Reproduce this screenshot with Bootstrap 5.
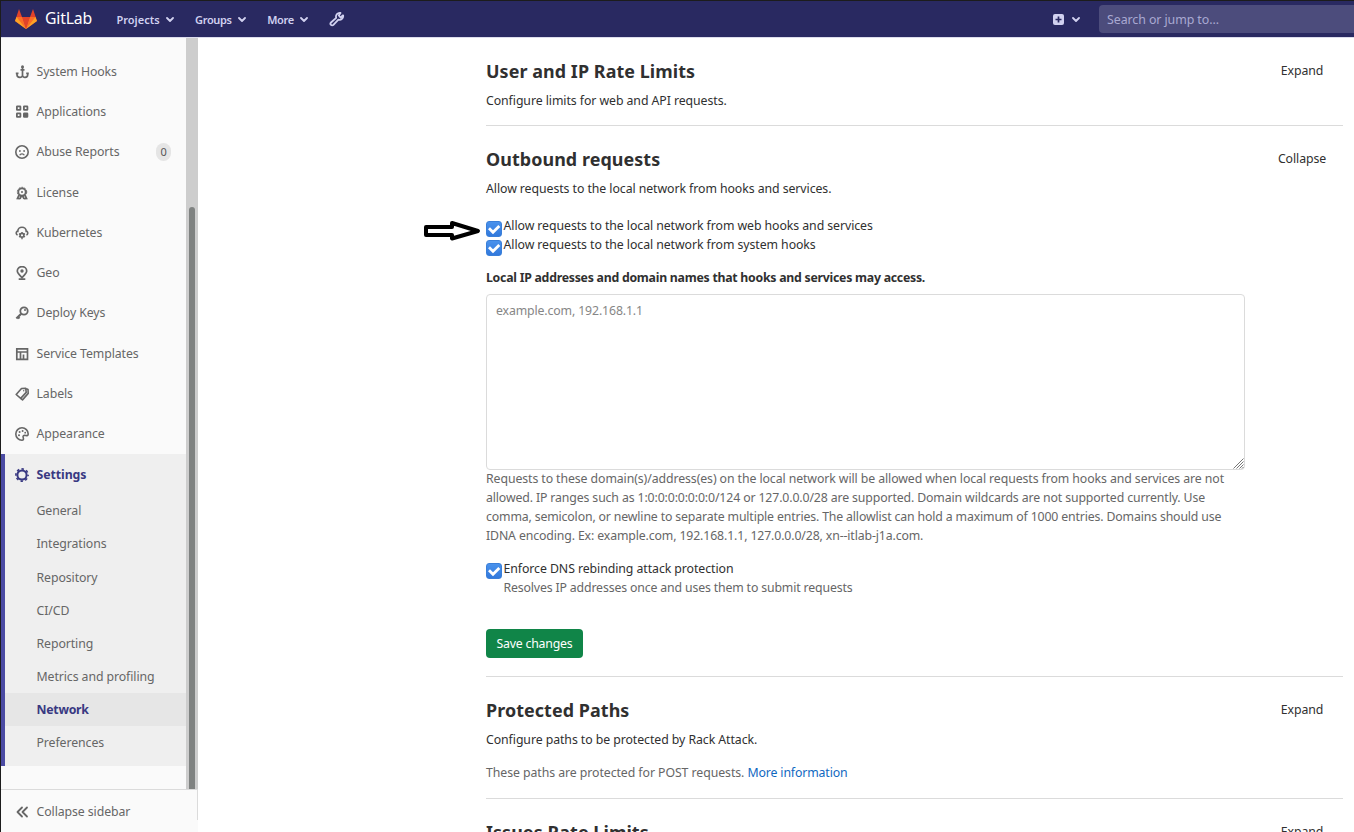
<!DOCTYPE html>
<html lang="en">
<head>
<meta charset="utf-8">
<meta name="viewport" content="width=device-width, initial-scale=1">
<title>Network · Settings · GitLab</title>
<link href="https://cdn.jsdelivr.net/npm/bootstrap@5.3.0/dist/css/bootstrap.min.css" rel="stylesheet">
<style>
body{font-family:"Noto Sans",sans-serif;font-size:12.3px;line-height:19px;letter-spacing:-.067px;color:#303030;height:832px;overflow:hidden;background:#fff;border-left:1px solid #1c1c1c;border-top:1px solid #1c1c1c}
a{text-decoration:none}
span,a,h2,p,label{white-space:nowrap}
.topbar{height:36px;background:#292961;color:#d1d1f0;flex:none;padding-left:14px}
.brand-name{font-size:15.8px;color:#fff;margin:-1px 24.5px 0 8px;width:47px;letter-spacing:-.2px}
.top-item{font-size:11px;font-weight:600;color:#d1d1f0;letter-spacing:0;margin-right:21px;gap:6.5px}
.top-item.snug{letter-spacing:-.35px}
.search-box{height:28px;background:#4c4c7c;border-radius:4px 0 0 4px;width:255px;padding-left:8px;color:#a9a9d2;font-size:12.4px;letter-spacing:-.08px;margin-left:19px}
.side{width:197px;background:#fafafa;flex:none;border-top:1px solid #dcdcec;height:795px}
.side-scroll{height:751px}
.side a{color:#666;letter-spacing:-.085px}
.side-nav{padding-top:13px}
.side-item{height:40.3px;padding-left:14px}
.side-item svg,.side-foot svg{width:14px;height:14px;margin-right:7.5px;flex:none;position:relative;top:.5px}
.count{background:#e5e5e5;border-radius:9px;width:15px;height:18px;font-size:11px;margin:0 15px 0 auto;color:#555}
.settings-group{background:#efefef;border-left:4px solid #4b4ba3;height:312px}
.settings-group .side-item{padding-left:10px}
.side a.chosen{color:#393982;font-weight:700;letter-spacing:-.06px}
.sub-item{height:33.1px;padding-left:31.500px}
.side a.sub-on{background:#e6e6e6;letter-spacing:-.26px}
.track{width:12px;background:#cdcdcd;padding:169px 3px 0}
.thumb{background:#7f8281;border-radius:3px 3px 0 0}
.side-foot{height:43px;border-top:1px solid #dbdbdb;padding-left:14px}
.foot-edge{width:1px;height:30px;background:#dbdbdb}
.main-pane{border-top:1px solid #dcdcec}
.content-col{margin-left:288px;width:857px}
.set-block{padding-top:21px;border-bottom:1px solid #dbdbdb}
.set-block h2{font-size:17.9px;line-height:24px;font-weight:700;letter-spacing:.08px;margin:0 0 8px}
.toggle-col{width:82px;text-align:center;line-height:24px;letter-spacing:-.09px}
.muted{color:#666}
.check-row{height:19px}
.box{width:16px;height:16px;margin:5px 1.500px 0 0;border:1px solid #3a7fd9;border-radius:3px;background:linear-gradient(#4a92ec,#3279dc);flex:none}
.box-up{margin-top:4px}
.box svg{display:block}
.arrow{position:absolute;left:-63px;top:3px}
.ip-label{letter-spacing:-.25px;margin:14px 0 7px}
.ip-wrap{width:759px;height:176px}
.ip-area{height:176px;border:1px solid #dbdbdb;border-radius:4px;padding:6px 9px;font-size:12.3px;line-height:19px;letter-spacing:-.13px;box-shadow:none;resize:none}
.ip-area::placeholder{color:#868686}
.grip{position:absolute;right:1px;bottom:1px}
.t1{letter-spacing:-.089px}.t2{letter-spacing:-.129px}.t3{letter-spacing:-.15px}
.save-btn{background:#108548;color:#fff;height:29px;width:97px;border-radius:4px;font-size:12.3px;line-height:19px;letter-spacing:-.2px;padding:0;margin:32px 0 18px}
.more-link{color:#1068bf}
</style>
</head>
<body class="d-flex flex-column">
<header class="topbar d-flex align-items-center">
  <svg width="22" height="20" viewBox="0 0 22 20"><path d="M4 0 0 12l11 8 11-8L18 0l-3 8H7z" fill="#e24329"/><path d="M0 12 1.500 8H7l4 12z" fill="#fca326"/><path d="M22 12 20.500 8H15l-4 12z" fill="#fca326"/><path d="M7 8H1.500L11 20zM15 8h5.500L11 20z" fill="#fc6d26"/><path d="M7 8h8l-4 12z" fill="#e24329"/></svg>
  <span class="brand-name">GitLab</span>
  <a href="#" class="top-item d-flex align-items-center">Projects <svg width="8" height="5" viewBox="0 0 8 5" fill="none" stroke="currentColor" stroke-width="1.800" stroke-linecap="round" stroke-linejoin="round"><path d="m1 1 3 3 3-3"/></svg></a>
  <a href="#" class="top-item snug d-flex align-items-center">Groups <svg width="8" height="5" viewBox="0 0 8 5" fill="none" stroke="currentColor" stroke-width="1.800" stroke-linecap="round" stroke-linejoin="round"><path d="m1 1 3 3 3-3"/></svg></a>
  <a href="#" class="top-item snug d-flex align-items-center">More <svg width="8" height="5" viewBox="0 0 8 5" fill="none" stroke="currentColor" stroke-width="1.800" stroke-linecap="round" stroke-linejoin="round"><path d="m1 1 3 3 3-3"/></svg></a>
  <svg width="16" height="16" viewBox="0 0 16 16" fill="none" stroke="#d1d1f0" stroke-width="1.800" stroke-linejoin="round"><path d="M11.500 2a3.700 3.700 0 0 0-4.300 4.800L2 11.500a1.600 1.600 0 0 0 2.400 2.400l5-5.300a3.700 3.700 0 0 0 4.700-4.300L11.500 6.500 9.800 4.500z"/></svg>
  <svg class="ms-auto" width="11" height="11" viewBox="0 0 11 11"><rect width="11" height="11" rx="2" fill="#d1d1f0"/><path d="M5.500 2.500v6M2.500 5.500h6" stroke="#292961" stroke-width="1.700"/></svg>
  <svg class="ms-2" width="8" height="5" viewBox="0 0 8 5" fill="none" stroke="#d1d1f0" stroke-width="1.800" stroke-linecap="round" stroke-linejoin="round"><path d="m1 1 3 3 3-3"/></svg>
  <div class="search-box d-flex align-items-center">Search or jump to…</div>
</header>
<div class="d-flex">
  <aside class="side">
    <div class="side-scroll d-flex">
      <nav class="side-nav flex-grow-1">
        <a href="#" class="side-item d-flex align-items-center"><svg viewBox="0 0 14 14" fill="none" stroke="currentColor" stroke-width="1.700"><circle cx="7.500" cy="1.800" r="1.500" fill="currentColor" stroke="none"/><path d="M7.500 2v8.500M5.500 4.800h4M2 7.500v2.200c0 3.500 5.500 3.500 5.500.5 0 3 5.200 3 5.200-.5V7.500M.8 8.300h2.700M11.200 8.300h2.600"/></svg>System Hooks</a>
        <a href="#" class="side-item d-flex align-items-center"><svg viewBox="0 0 14 14" fill="none" stroke="currentColor" stroke-width="1.800"><rect x="1.900" y="1.400" width="3.500" height="3.500" rx=".3"/><rect x="8.900" y="1.400" width="3.500" height="3.500" rx=".3"/><rect x="1.900" y="8.400" width="3.500" height="3.500" rx=".3"/><rect x="8.900" y="8.400" width="3.500" height="3.500" rx=".3" fill="currentColor"/></svg>Applications</a>
        <a href="#" class="side-item d-flex align-items-center"><svg viewBox="0 0 14 14" fill="none" stroke="currentColor" stroke-width="1.600"><circle cx="7" cy="7" r="6.200"/><path d="M4.700 10.200c.8-1.900 3.800-1.900 4.600 0" stroke-width="1.300"/><circle cx="4.900" cy="6" r=".9" fill="currentColor" stroke="none"/><circle cx="9.100" cy="6" r=".9" fill="currentColor" stroke="none"/></svg>Abuse Reports<span class="count d-flex align-items-center justify-content-center">0</span></a>
        <a href="#" class="side-item d-flex align-items-center"><svg viewBox="0 0 14 14" fill="none" stroke="currentColor" stroke-width="1.800"><circle cx="7" cy="6" r="3.700"/><circle cx="7" cy="6" r="4.700" stroke-width="1" stroke-dasharray="1.800 1.200"/><circle cx="7" cy="6" r="1" fill="currentColor" stroke="none"/><path d="M4 9 2.500 12.500l2.500.2M10 9l1.500 3.500-2.500.2M5 13l1-2.700h2L9 13"/></svg>License</a>
        <a href="#" class="side-item d-flex align-items-center"><svg viewBox="0 0 14 14" fill="none" stroke="currentColor" stroke-width="1.600"><path d="M2.600 8.900A2 2 0 0 1 2 5.400h.8a4.200 4.200 0 0 1 8.400 0h.8a2 2 0 0 1-.6 3.500"/><circle cx="7" cy="9.300" r="1.900"/><path d="M7 6v1.300M7 11.300v1.900M4 7.600l1.200.7M10 7.600l-1.200.7M4 11l1.200-.7M10 11l-1.200-.7" stroke-width="1.400"/></svg>Kubernetes</a>
        <a href="#" class="side-item d-flex align-items-center"><svg viewBox="0 0 14 14" fill="none" stroke="currentColor" stroke-width="1.700"><path d="M7 11.500C4 8.500 2.300 7 2.300 4.900a4.700 4.300 0 0 1 9.400 0C11.700 7 10 8.500 7 11.500zM3.700 13.200h6.600"/><circle cx="7" cy="5" r="1.700" fill="currentColor" stroke="none"/></svg>Geo</a>
        <a href="#" class="side-item d-flex align-items-center"><svg viewBox="0 0 14 14" fill="none" stroke="currentColor" stroke-width="1.800"><circle cx="9" cy="5" r="3.700"/><path d="m6.200 7.700-4.800 4.800M2.500 10.500l2 2" stroke-width="2.200"/><circle cx="10" cy="4" r="1" fill="currentColor" stroke="none"/></svg>Deploy Keys</a>
        <a href="#" class="side-item d-flex align-items-center"><svg viewBox="0 0 14 14" fill="none" stroke="currentColor" stroke-width="1.700"><path d="M1.800 1.800h10.700v10.500H1.800zM1.800 5h11M5.500 5v7M8.500 7.500v5"/></svg>Service Templates</a>
        <a href="#" class="side-item d-flex align-items-center"><svg viewBox="0 0 14 14" fill="none" stroke="currentColor" stroke-width="1.600" stroke-linejoin="round"><path d="M1.200 7.500 6.500 1.500l4.200-.3.500 4.200-5.500 6zM11.500 1.800l1.500.6.200 4-5.700 6.500-2-1.500"/><circle cx="8.700" cy="3.800" r=".7" fill="currentColor" stroke="none"/></svg>Labels</a>
        <a href="#" class="side-item d-flex align-items-center"><svg viewBox="0 0 14 14" fill="none" stroke="currentColor" stroke-width="1.600" stroke-linejoin="round"><path d="M7 13.200A6.200 6.200 0 1 1 13.200 7c0 1.700-1.200 1.800-2.500 1.500C8.500 8 7.500 9 8.300 11c.5 1.500 0 2.200-1.300 2.200z"/><g fill="currentColor" stroke="none"><circle cx="4" cy="8.300" r="1"/><circle cx="4.600" cy="5" r="1"/><circle cx="7.600" cy="3.900" r="1"/><circle cx="10.200" cy="5.700" r=".9"/></g></svg>Appearance</a>
        <div class="settings-group">
          <a href="#" class="side-item chosen d-flex align-items-center"><svg viewBox="0 0 14 14" fill="none" stroke="currentColor"><circle cx="7" cy="7" r="4.600" stroke-width="2"/><circle cx="7" cy="7" r="6.100" stroke-width="1.600" stroke-dasharray="2.500 2.290" stroke-dashoffset="1.250"/></svg>Settings</a>
          <a href="#" class="sub-item d-flex align-items-center">General</a>
          <a href="#" class="sub-item d-flex align-items-center">Integrations</a>
          <a href="#" class="sub-item d-flex align-items-center">Repository</a>
          <a href="#" class="sub-item d-flex align-items-center">CI/CD</a>
          <a href="#" class="sub-item d-flex align-items-center">Reporting</a>
          <a href="#" class="sub-item d-flex align-items-center">Metrics and profiling</a>
          <a href="#" class="sub-item sub-on chosen d-flex align-items-center">Network</a>
          <a href="#" class="sub-item d-flex align-items-center">Preferences</a>
        </div>
      </nav>
      <div class="track d-flex"><div class="thumb flex-grow-1"></div></div>
    </div>
    <div class="side-foot d-flex">
      <a href="#" class="d-flex align-items-center flex-grow-1"><svg viewBox="0 0 14 14" fill="none" stroke="currentColor" stroke-width="1.800" stroke-linecap="round" stroke-linejoin="round"><path d="M7 2.500 2.500 7 7 11.500M12 2.500 7.500 7l4.500 4.500"/></svg>Collapse sidebar</a>
      <div class="foot-edge"></div>
    </div>
  </aside>
  <main class="main-pane flex-grow-1">
    <div class="content-col">
      <section class="set-block d-flex justify-content-between">
        <div><h2>User and IP Rate Limits</h2><p style="margin-bottom:15px">Configure limits for web and API requests.</p></div>
        <a href="#" class="toggle-col text-reset">Expand</a>
      </section>
      <section class="set-block">
        <div class="d-flex justify-content-between"><h2>Outbound requests</h2><a href="#" class="toggle-col text-reset">Collapse</a></div>
        <p style="margin-bottom:18px">Allow requests to the local network from hooks and services.</p>
        <div class="check-row position-relative d-flex align-items-start">
          <svg class="arrow" width="58" height="24" viewBox="0 0 58 24" fill="none" stroke="#000" stroke-width="4" stroke-linejoin="round"><path d="M3 8h26V4L55 12 29 19.500V16H3z"/></svg>
          <div class="box"><svg width="14" height="14" viewBox="0 0 14 14" fill="none" stroke="#fff" stroke-width="2.800"><path d="m2 6.300 4 4 6.300-6.300"/></svg></div>
          <label>Allow requests to the local network from web hooks and services</label>
        </div>
        <div class="check-row d-flex align-items-start">
          <div class="box"><svg width="14" height="14" viewBox="0 0 14 14" fill="none" stroke="#fff" stroke-width="2.800"><path d="m2 6.300 4 4 6.300-6.300"/></svg></div>
          <label>Allow requests to the local network from system hooks</label>
        </div>
        <label class="ip-label fw-bold d-block">Local IP addresses and domain names that hooks and services may access.</label>
        <div class="ip-wrap position-relative">
          <textarea class="ip-area form-control" placeholder="example.com, 192.168.1.1"></textarea>
          <svg class="grip" width="11" height="11" viewBox="0 0 11 11" stroke="#777" stroke-width="1"><path d="M.5 10.500l10-10M3.500 10.500l7-7M6.500 10.500l4-4M9 10.500l1.500-1.500"/></svg>
        </div>
        <p class="muted" style="margin:-1px 0 14px"><span class="t1">Requests to these domain(s)/address(es) on the local network will be allowed when local requests from hooks and services are not</span><br><span class="t2">allowed. IP ranges such as 1:0:0:0:0:0:0:0/124 or 127.0.0.0/28 are supported. Domain wildcards are not supported currently. Use</span><br><span class="t3">comma, semicolon, or newline to separate multiple entries. The allowlist can hold a maximum of 1000 entries. Domains should use</span><br><span class="t2">IDNA encoding. Ex: example.com, 192.168.1.1, 127.0.0.0/28, xn--itlab-j1a.com.</span></p>
        <div class="d-flex">
          <div class="box box-up"><svg width="14" height="14" viewBox="0 0 14 14" fill="none" stroke="#fff" stroke-width="2.800"><path d="m2 6.300 4 4 6.300-6.300"/></svg></div>
          <div><label class="d-block">Enforce DNS rebinding attack protection</label><span class="muted t3 d-block">Resolves IP addresses once and uses them to submit requests</span></div>
        </div>
        <button class="btn save-btn d-block">Save changes</button>
      </section>
      <section class="set-block">
        <div class="d-flex justify-content-between"><h2>Protected Paths</h2><a href="#" class="toggle-col text-reset">Expand</a></div>
        <p style="margin-bottom:14px">Configure paths to be protected by Rack Attack.</p>
        <p class="muted" style="margin-bottom:16px">These paths are protected for POST requests. <a href="#" class="more-link t2">More information</a></p>
      </section>
      <section class="set-block border-0">
        <div class="d-flex justify-content-between"><h2>Issues Rate Limits</h2><a href="#" class="toggle-col text-reset">Expand</a></div>
      </section>
    </div>
  </main>
</div>
</body>
</html>
